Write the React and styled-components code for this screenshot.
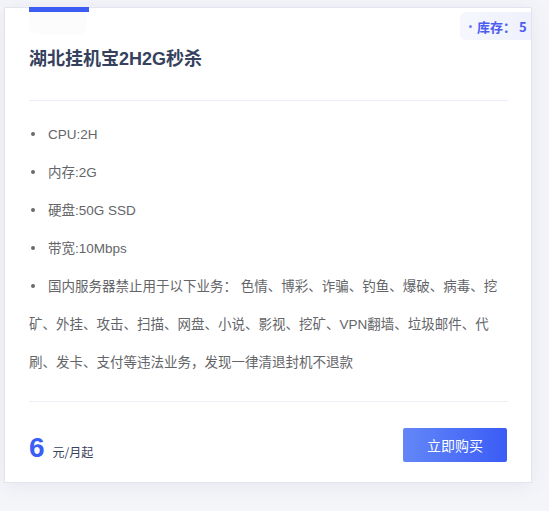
import React from 'react';
import styled, {createGlobalStyle} from 'styled-components';

const GlobalStyle = createGlobalStyle`
body {
    margin: 0;
    background: #f4f5f9;
    font-family: "Liberation Sans", "Noto Sans CJK SC", sans-serif;
}
`;

const Page = styled.div`
padding: 7px 0 0 4px;
height: 511px;
box-sizing: border-box;
`;

const Card = styled.div`
position: relative;
width: 528px;
box-sizing: border-box;
background: #fff;
border: 1px solid #e3e5ee;
box-shadow: 0 2px 18px rgba(70, 80, 130, 0.08);
padding: 0 23px 0 24px;
`;

const Accent = styled.div`
width: 60px;
height: 5px;
margin-top: -1px;
background: #3d5cf3;
`;

const Ghost = styled.div`
width: 58px;
height: 22px;
background: #fcfcfd;
border-radius: 0 0 8px 8px;
`;

const Stock = styled.div`
position: absolute;
top: 4px;
right: 0;
height: 28px;
width: 71px;
box-sizing: border-box;
padding-left: 9px;
display: flex;
align-items: center;
gap: 5px;
border-radius: 6px 0 0 6px;
background: linear-gradient(90deg, #f6f7fe, #eef1fc);
color: #4b5cf0;
font-size: 13px;
font-weight: 700;
font-family: "Noto Sans CJK SC", sans-serif;
`;

const Dot = styled.span`
width: 3px;
height: 3px;
border-radius: 50%;
background: #7080f2;
`;

const Title = styled.h3`
margin: 12px 0 0;
font-size: 18px;
line-height: 26px;
font-weight: 700;
color: #36415d;
font-family: "Liberation Sans", "Noto Sans CJK SC", sans-serif;
`;

const Divider = styled.div`
height: 1px;
background: ${p => p.color};
margin-top: ${p => p.top}px;
`;

const List = styled.ul`
list-style: none;
margin: 15px 0 0;
padding: 0;
`;

const Item = styled.li`
font-size: 13.5px;
line-height: 38px;
color: #646569;
&::before {
    content: '';
    display: inline-block;
    width: 4px;
    height: 4px;
    border-radius: 50%;
    background: #6a6b70;
    margin: 0 13px 0 2px;
    vertical-align: middle;
    position: relative;
    top: -1px;
}
`;

const Footer = styled.div`
display: flex;
justify-content: space-between;
align-items: flex-end;
margin-top: 19px;
padding: 26px 1px 20px 0;
border-top: 1px solid #eeeff4;
`;

const Price = styled.div`
display: flex;
align-items: baseline;
gap: 8px;
`;

const Amount = styled.span`
font-size: 28px;
line-height: 28px;
font-weight: 700;
color: #3b5ef5;
`;

const Unit = styled.span`
font-size: 12px;
color: #36415d;
font-family: "Noto Sans CJK SC", sans-serif;
`;

const BuyButton = styled.button`
width: 104px;
height: 34px;
border: none;
border-radius: 2px;
background: linear-gradient(90deg, #6387f8, #3b5cf5);
color: #fff;
font-size: 14px;
font-family: "Noto Sans CJK SC", sans-serif;
cursor: pointer;
`;

const specs = [
    'CPU:2H',
    '内存:2G',
    '硬盘:50G SSD',
    '带宽:10Mbps',
    '国内服务器禁止用于以下业务： 色情、博彩、诈骗、钓鱼、爆破、病毒、挖矿、外挂、攻击、扫描、网盘、小说、影视、挖矿、VPN翻墙、垃圾邮件、代刷、发卡、支付等违法业务，发现一律清退封机不退款'
];

const App = () => {
    return (
        <Page>
            <GlobalStyle/>
            <Card>
                <Accent/>
                <Ghost/>
                <Stock><Dot/>库存： 5</Stock>
                <Title>湖北挂机宝2H2G秒杀</Title>
                <Divider color='#eaeefa' top={28}/>
                <List>
                    {specs.map(s => <Item key={s}>{s}</Item>)}
                </List>
                <Footer>
                    <Price>
                        <Amount>6</Amount>
                        <Unit>元/月起</Unit>
                    </Price>
                    <BuyButton>立即购买</BuyButton>
                </Footer>
            </Card>
        </Page>
    );
};

export default App;
